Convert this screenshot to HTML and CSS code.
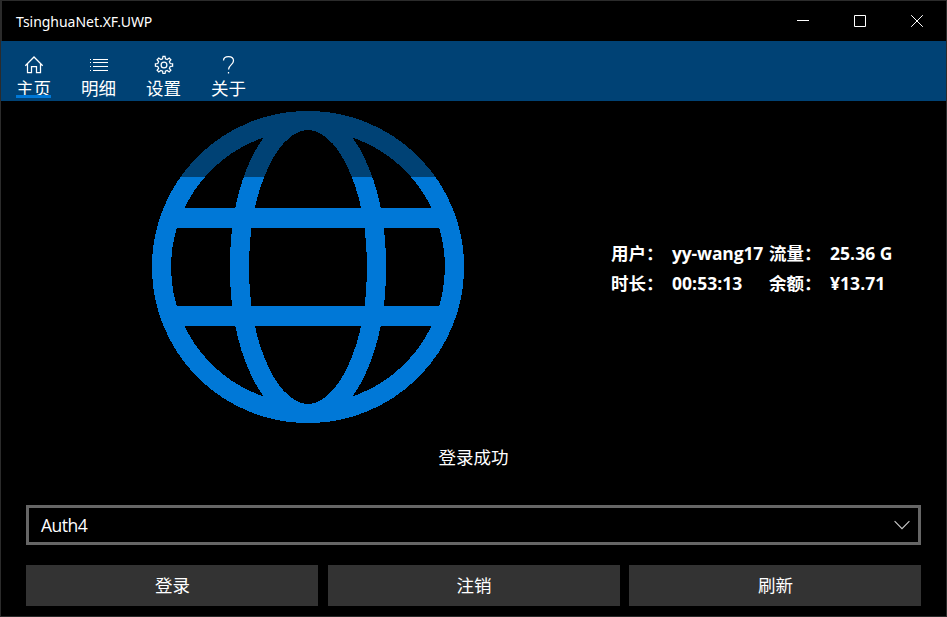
FILE: index.html
```html
<!DOCTYPE html>
<html lang="zh-CN">
<head>
<meta charset="utf-8">
<title>TsinghuaNet.XF.UWP</title>
<link rel="stylesheet" href="styles.css">
</head>
<body>
<div class="window">
  <header class="titlebar">
    <span class="title">TsinghuaNet.XF.UWP</span>
    <div class="controls">
      <svg class="control" viewBox="0 0 57 40"><path d="M23 19.5h12"/></svg>
      <svg class="control" viewBox="0 0 57 40"><path d="M23.5 14.5h11v11h-11z"/></svg>
      <svg class="control close" viewBox="0 0 57 40"><path d="M23.2 14.2l11.6 11.6M34.8 14.2l-11.6 11.6"/></svg>
    </div>
  </header>
  <nav class="tabs">
    <a class="tab active">
      <svg class="icon" viewBox="0 0 21 20"><path d="M2.300 11.700L11 3l8.700 8.700M4.500 9.800v8.700h4v-6h5v6h4V9.800"/></svg>
      <span class="label">主页</span>
    </a>
    <a class="tab">
      <svg class="icon crisp" viewBox="0 0 21 20"><path d="M5 5.500h15M5 8.500h15M5 12.500h15M5 16.500h15M2 5.500h1M2 8.500h1M2 12.500h1M2 16.500h1"/></svg>
      <span class="label">明细</span>
    </a>
    <a class="tab">
      <svg class="icon" viewBox="0 0 21 20"><g transform="translate(1 1)"><path d="M8.600 3.700L9 1.300h2l.4 2.400 1.800.8 2-1.500 1.700 1.700-1.500 2 .8 1.800 2.400.4v2.200l-2.400.4-.8 1.800 1.500 2-1.700 1.700-2-1.500-1.800.8-.4 2.400H9l-.4-2.400-1.800-.8-2 1.500-1.700-1.700 1.500-2-.8-1.800-2.400-.4V8.900l2.400-.4.8-1.800-1.500-2L4.800 3l2 1.500z"/><circle cx="10" cy="10" r="2.900"/></g></svg>
      <span class="label">设置</span>
    </a>
    <a class="tab">
      <svg class="icon" viewBox="0 0 21 20"><path d="M5.500 6.500C5.500 4 7.500 2.500 10.500 2.500c3 0 5 1.700 5 4.300 0 4-5 4.200-5 8.700M10.500 18v1.500"/></svg>
      <span class="label">关于</span>
    </a>
  </nav>
  <main class="page">
    <section class="overview">
      <div class="globe-cell">
        <svg class="globe" viewBox="0 0 312 312">
          <defs>
            <linearGradient id="level" gradientUnits="userSpaceOnUse" x1="0" y1="0" x2="0" y2="312">
              <stop class="used" offset="0.21154"/>
              <stop class="left" offset="0.21154"/>
            </linearGradient>
          </defs>
          <g fill="none" stroke="url(#level)" stroke-width="19.2">
            <circle cx="156" cy="156" r="146.500"/>
            <ellipse cx="156" cy="156" rx="68.500" ry="146.500"/>
          </g>
          <path fill="url(#level)" d="M25 97h262v20H25zM25 195h262v20H25z"/>
        </svg>
      </div>
      <div class="info">
        <span>用户：</span><span class="latin">yy-wang17</span><span>流量：</span><span class="latin amount">25.36 G</span>
        <span>时长：</span><span class="latin amount">00:53:13</span><span>余额：</span><span class="latin amount">¥13.71</span>
      </div>
    </section>
    <p class="status">登录成功</p>
    <div class="select">
      <span class="value">Auth4</span>
      <svg class="chevron" viewBox="0 0 16 10"><path d="M.6 1.200L8 8.600l7.400-7.400"/></svg>
    </div>
    <div class="actions">
      <button class="button">登录</button>
      <button class="button">注销</button>
      <button class="button">刷新</button>
    </div>
  </main>
</div>
</body>
</html>
```
FILE: styles.css
```css
* { box-sizing: border-box; }

body {
  margin: 0;
  background: #000;
  color: #fff;
  font-family: "Open Sans", "Noto Sans CJK SC", sans-serif;
  font-size: 17.5px;
}

.window {
  width: 947px;
  height: 617px;
  border: 1px solid #2b2b2b;
  display: flex;
  flex-direction: column;
}

.titlebar {
  height: 40px;
  display: flex;
  justify-content: space-between;
  align-items: center;
  padding: 0 1px 0 14px;
  border-left: 1px solid #2b2b2b;
}

.title {
  font-family: "Noto Sans", sans-serif;
  font-size: 14px;
  letter-spacing: -0.03px;
}

.controls { display: flex; }

.control {
  width: 57px;
  height: 40px;
  fill: none;
  stroke: #fff;
  stroke-width: 1;
}

.tabs {
  height: 60px;
  display: flex;
  background: #004275;
}

.tab {
  width: 65px;
  display: flex;
  flex-direction: column;
  align-items: center;
  padding-top: 13px;
}

.icon {
  width: 21px;
  height: 20px;
  fill: none;
  stroke: #fff;
  stroke-width: 1.25;
}

.crisp { shape-rendering: crispEdges; stroke-width: 1; }

.label {
  position: relative;
  width: 35px;
  height: 24px;
  line-height: 27px;
  white-space: nowrap;
  font-family: "Noto Sans CJK SC", sans-serif;
}

/* selection bar drawn over the lower edge of the label */
.active .label::after {
  content: "";
  position: absolute;
  left: 0;
  right: 0;
  bottom: 0;
  height: 3px;
  background: #0078d7;
}

.page {
  flex: 1;
  display: flex;
  flex-direction: column;
  padding: 10px 25px;
}

.overview {
  height: 312px;
  display: grid;
  grid-template-columns: 564px 1fr;
  align-items: center;
  margin-right: -10px;
}

.globe-cell {
  display: flex;
  justify-content: center;
}

.globe {
  width: 312px;
  height: 312px;
  shape-rendering: crispEdges;
}

.used { stop-color: #004275; }
.left { stop-color: #0078d7; }

.info {
  display: grid;
  grid-template-columns: 61px 97px 61px 80px;
  grid-auto-rows: 30px;
  line-height: 30px;
  padding: 2px 0 0 21px;
  font-weight: 700;
  font-family: "Noto Sans CJK SC", sans-serif;
  white-space: nowrap;
}

.latin {
  font-family: "Open Sans", "Noto Sans CJK SC", sans-serif;
  letter-spacing: -0.15px;
}

.amount { letter-spacing: 0.05px; }

.status {
  margin: 19px 0 0;
  height: 30px;
  line-height: 30px;
  text-align: center;
  font-family: "Noto Sans CJK SC", sans-serif;
}

.select {
  margin-top: 33px;
  height: 40px;
  border: 3px solid #666;
  display: flex;
  align-items: center;
  justify-content: space-between;
  padding: 0 8.5px 0 12px;
}

.value { letter-spacing: -0.5px; }

.chevron {
  width: 16px;
  height: 10px;
  fill: none;
  stroke: #ccc;
  stroke-width: 1.1;
}

.actions {
  margin-top: 20px;
  display: grid;
  grid-template-columns: repeat(3, 1fr);
  gap: 9.5px;
}

.button {
  height: 41px;
  padding: 0 0 1px 1px;
  border: 0;
  background: #333;
  color: #fff;
  font: 17.5px/40px "Noto Sans CJK SC", sans-serif;
}
```
